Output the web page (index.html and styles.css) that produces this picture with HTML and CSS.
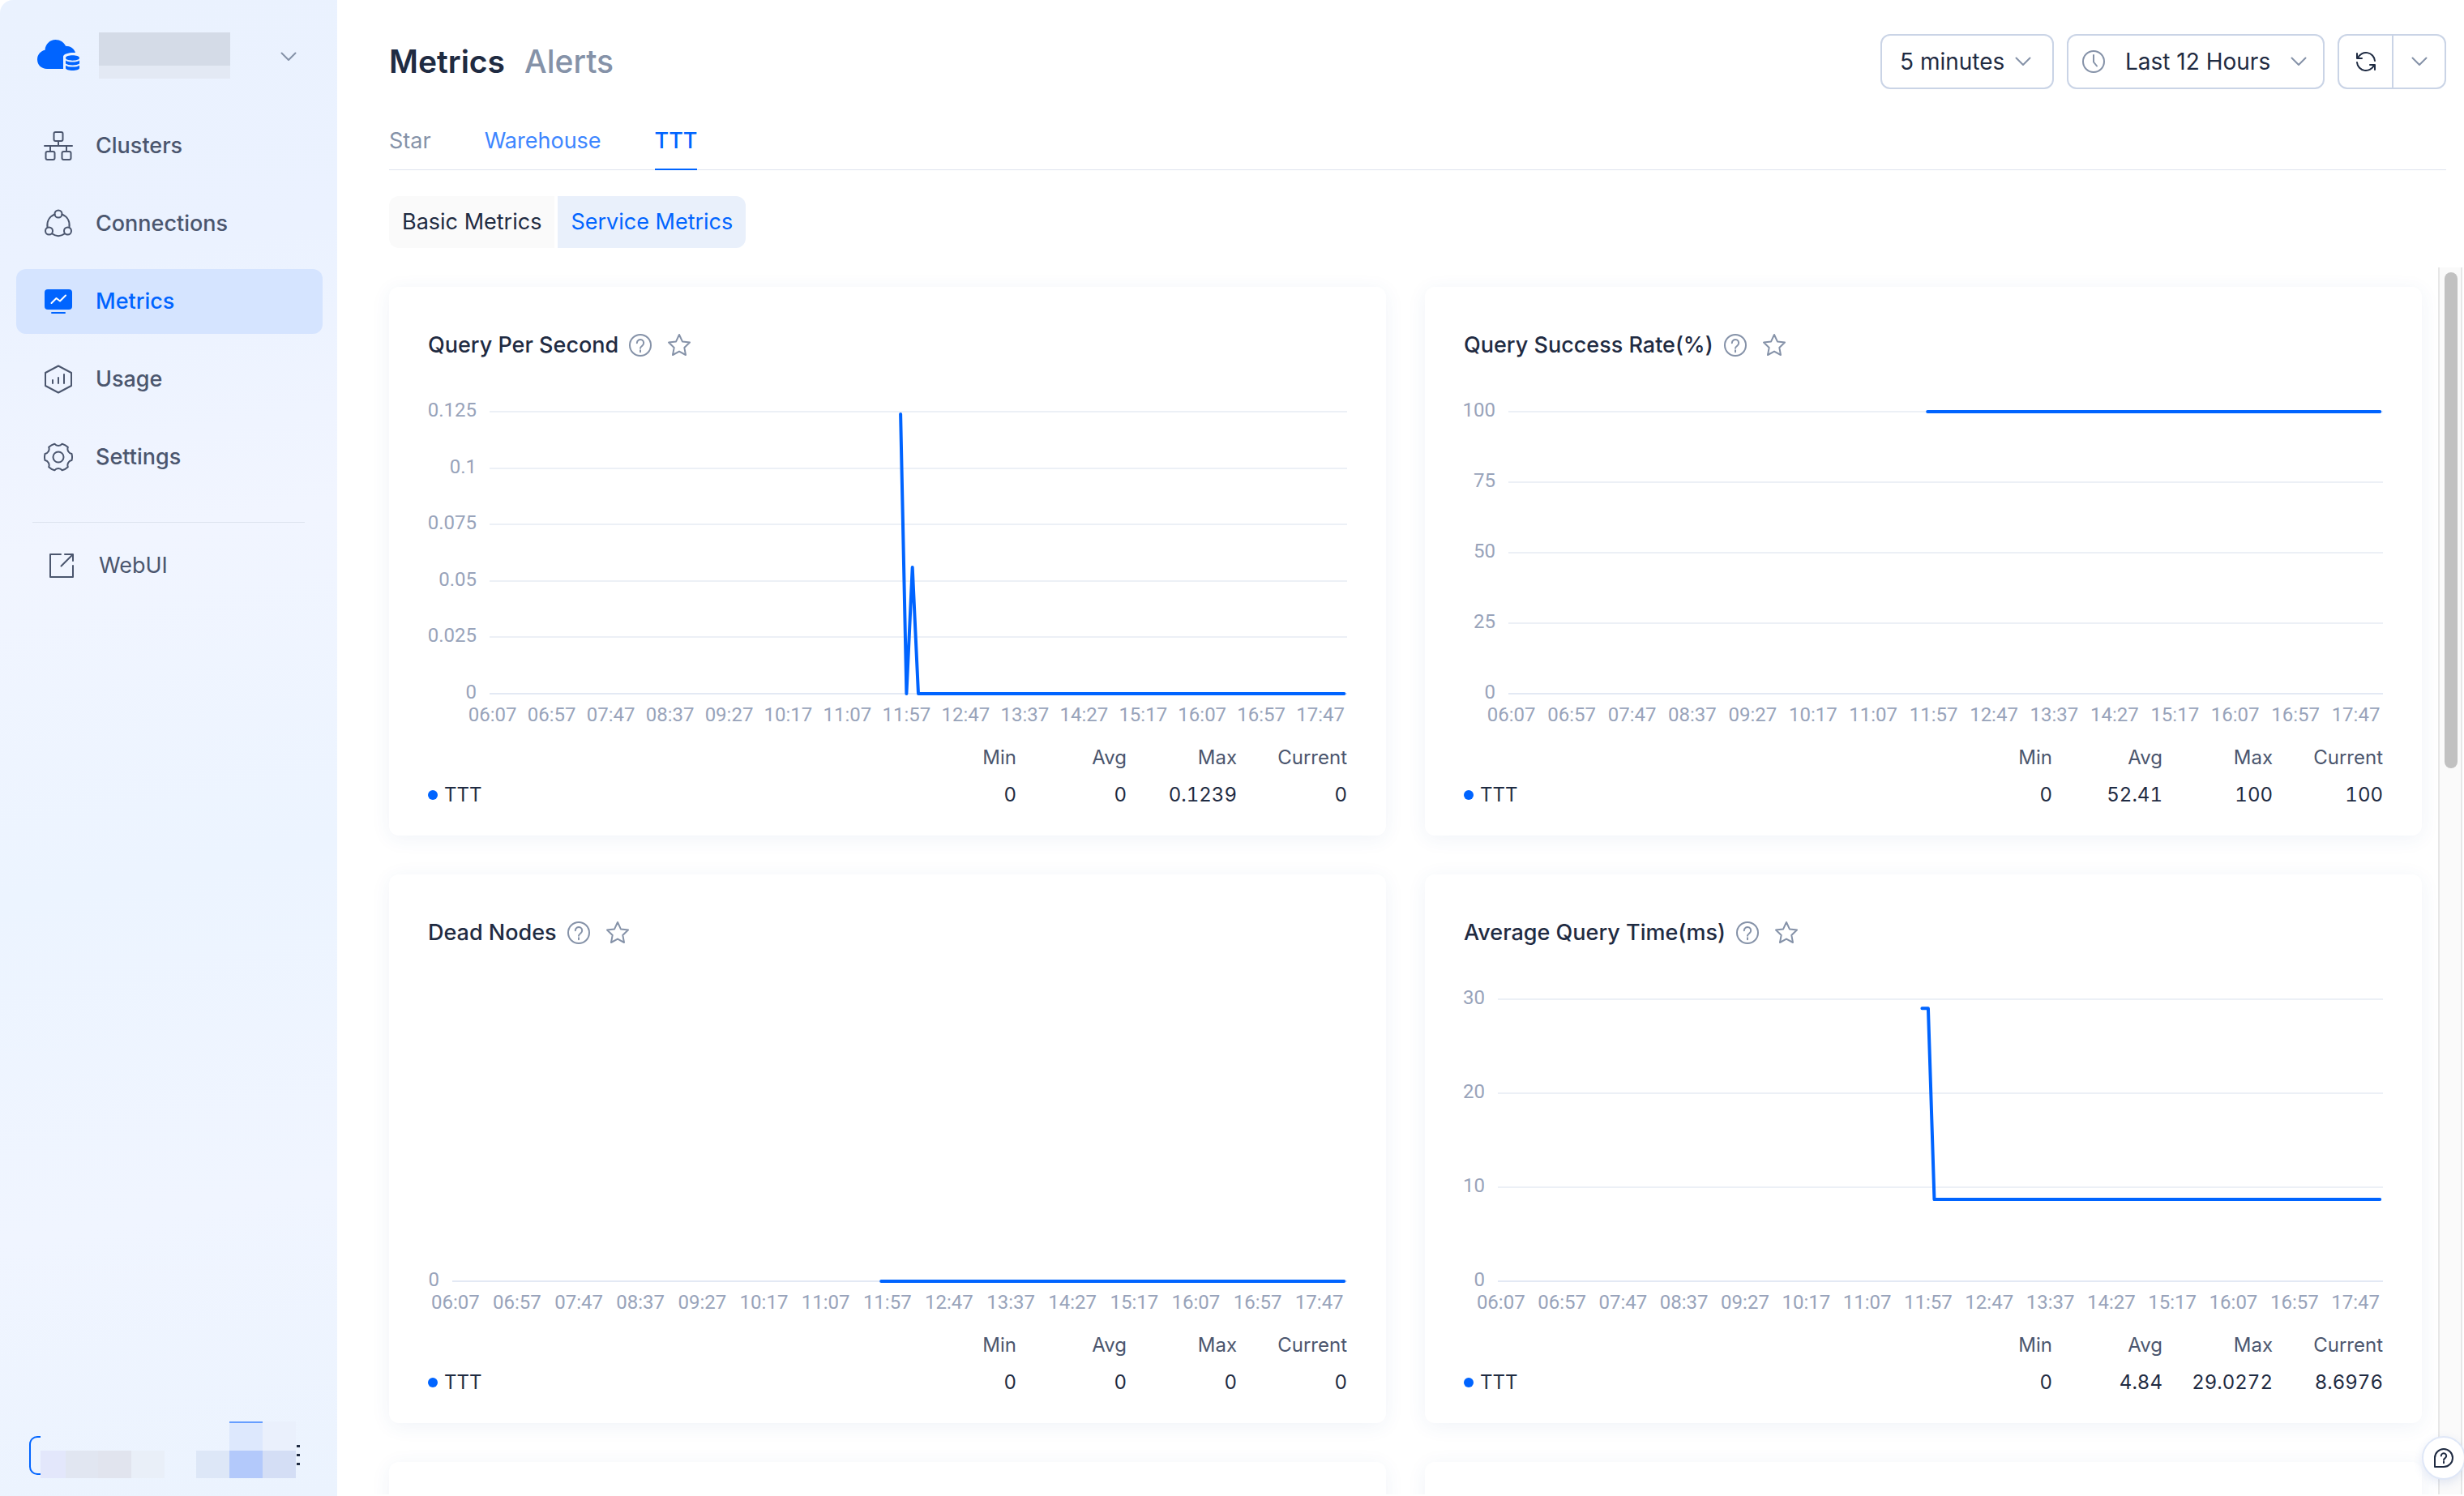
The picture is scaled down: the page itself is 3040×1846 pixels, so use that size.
FILE: index.html
```html
<!DOCTYPE html>
<html lang="en">
<head>
    <meta charset="UTF-8">
    <meta name="viewport" content="width=device-width, initial-scale=1.0">
    <title>Metrics</title>
    <link rel="stylesheet" href="styles.css">
</head>
<body>
    <!-- shared icons -->
    <svg class="defs" width="0" height="0" aria-hidden="true">
        <symbol id="chevron" viewBox="0 0 20 12"><path d="M1.500 1.500l8.500 8.500 8.500-8.500"/></symbol>
        <symbol id="help" viewBox="0 0 30 30">
            <circle cx="15" cy="15" r="13"/>
            <path d="M10.800 12.200a4.200 4.200 0 1 1 6.600 3.400c-1.500 1.100-2.400 1.700-2.400 3.200"/>
            <path d="M15 21.200v2"/>
        </symbol>
        <symbol id="star" viewBox="0 0 30 30">
            <path d="M15 2l3.900 8.400 9.100 1.200-6.700 6.300 1.700 9.100-8-4.400-8 4.400 1.700-9.100L2 11.600l9.100-1.200z"/>
        </symbol>
    </svg>

    <div class="app">
        <aside class="sidebar">
            <div class="brand">
                <svg class="brand-logo" viewBox="0 0 52 38">
                    <path d="M12 36C5 36 0 31 0 24.500c0-6 4-10.700 9.500-11.800C10 5.500 15.500 0 22.500 0c5.600 0 10.200 3 12.500 7.800 5.800 0 10.800 3.400 12 8.200-7-.5-14 1-15 4.500V36z"/>
                    <path d="M35 22.500c0-4.200 17-4.200 17 0s-17 4.200-17 0zM35 25.500c3 2.700 14 2.700 17 0v4c-3 2.500-14 2.500-17 0zM35 31.700c3 2.500 14 2.500 17 0V35c0 4-17 4-17 0z"/>
                </svg>
                <div class="mask-name"><span></span><span></span></div>
                <svg class="chevron brand-chevron"><use href="#chevron"/></svg>
            </div>

            <nav class="nav">
                <a class="nav-item" href="#">
                    <svg class="nav-icon" viewBox="0 0 36 36">
                        <rect x="12.500" y="1" width="11" height="11" rx="2"/>
                        <rect x="2.500" y="25" width="11" height="10" rx="2"/>
                        <rect x="22.500" y="25" width="11" height="10" rx="2"/>
                        <path d="M18 12v6M1 18h34M8 18v7M28 18v7"/>
                    </svg>
                    Clusters
                </a>
                <a class="nav-item" href="#">
                    <svg class="nav-icon" viewBox="0 0 36 36">
                        <circle cx="18" cy="6" r="4.500"/>
                        <circle cx="6.500" cy="27" r="4.500"/>
                        <circle cx="29.500" cy="27" r="4.500"/>
                        <path d="M13.500 6.500C7 9 3.500 15 4.500 22.500M22.500 6.500C29 9 32.500 15 31.500 22.500M10.500 30.500c4.500 3.500 10.500 3.500 15 0"/>
                    </svg>
                    Connections
                </a>
                <a class="nav-item active" href="#">
                    <svg class="nav-icon" viewBox="0 0 36 36">
                        <rect class="solid" x="1" y="3" width="34" height="25" rx="4"/>
                        <path d="M10 32h16"/>
                        <path class="spark" d="M9.500 20l6-6 4.500 3.500 7-7"/>
                    </svg>
                    Metrics
                </a>
                <a class="nav-item" href="#">
                    <svg class="nav-icon" viewBox="0 0 36 36">
                        <path d="M18 1.500L34 10v16l-16 8.500L2 26V10z"/>
                        <path d="M11 19v4M18 16v7M25 12v11"/>
                    </svg>
                    Usage
                </a>
                <a class="nav-item" href="#">
                    <svg class="nav-icon" viewBox="0 0 36 36">
                        <path d="M34.500 22.100A6 6 0 0 0 29.800 30.200A17 17 0 0 1 22.700 34.300A6 6 0 0 0 13.300 34.300A17 17 0 0 1 6.200 30.200A6 6 0 0 0 1.500 22.100A17 17 0 0 1 1.500 13.900A6 6 0 0 0 6.200 5.800A17 17 0 0 1 13.300 1.700A6 6 0 0 0 22.700 1.700A17 17 0 0 1 29.800 5.800A6 6 0 0 0 34.500 13.900A17 17 0 0 1 34.500 22.100z"/>
                        <circle cx="18" cy="18" r="6.500"/>
                    </svg>
                    Settings
                </a>
            </nav>

            <a class="nav-item web-ui" href="#">
                <svg class="nav-icon" viewBox="0 0 36 36">
                    <path d="M17 4H4v28h28V18M22 4h10v8M32 4L17.500 18.500"/>
                </svg>
                WebUI
            </a>

            <div class="account">
                <div class="account-frame"></div>
                <div class="mask-row"><span></span><span></span><span></span><span></span></div>
                <div class="mask-grid"><span></span><span></span><span></span><span></span><span></span><span></span></div>
                <button class="more" aria-label="More"><i></i><i></i><i></i></button>
            </div>
        </aside>

        <main class="main">
            <header class="header">
                <h1><a href="#">Metrics</a><a class="muted" href="#">Alerts</a></h1>
                <div class="toolbar">
                    <div class="field">
                        <select aria-label="Interval"><option>5 minutes</option></select>
                        <svg class="chevron"><use href="#chevron"/></svg>
                    </div>
                    <div class="field range">
                        <svg class="clock" viewBox="0 0 30 30"><circle cx="15" cy="15" r="13"/><path d="M15 7v8.500l4 5"/></svg>
                        <select aria-label="Time range"><option>Last 12 Hours</option></select>
                        <svg class="chevron"><use href="#chevron"/></svg>
                    </div>
                    <div class="refresh">
                        <button aria-label="Refresh">
                            <svg class="refresh-icon" viewBox="0 0 26 26">
                                <path d="M2 3v6h6M3 8.500A11 11 0 0 1 24 12M24 23v-6h-6M23 17.500A11 11 0 0 1 2 14"/>
                            </svg>
                        </button>
                        <button aria-label="Refresh options"><svg class="chevron"><use href="#chevron"/></svg></button>
                    </div>
                </div>
            </header>

            <nav class="tabs">
                <a class="muted" href="#">Star</a>
                <a class="hover" href="#">Warehouse</a>
                <a class="active" href="#">TTT</a>
            </nav>

            <div class="switch">
                <button>Basic Metrics</button>
                <button class="active">Service Metrics</button>
            </div>

            <div class="scroll">
                <div class="cards" id="cards"></div>
                <div class="track"><div class="thumb"></div></div>
            </div>
        </main>

        <button class="support" aria-label="Help">
            <svg viewBox="0 0 26 26">
                <path d="M2 24V13a11 11 0 1 1 11 11z"/>
                <path d="M9.800 10.500a3.200 3.200 0 1 1 5 2.600c-1.200.8-1.800 1.400-1.800 2.600M13 17.800v1.400"/>
            </svg>
        </button>
    </div>

    <script src="charts.js"></script>
</body>
</html>
```

FILE: styles.css
```css
* {
    box-sizing: border-box;
}

body {
    margin: 0;
    font-family: Inter, "Liberation Sans", sans-serif;
    font-size: 27px;
    line-height: 40px;
    color: #1f2b42;
    background: #fff;
}

a {
    color: inherit;
    text-decoration: none;
}

button, select {
    font: inherit;
    color: inherit;
    background: none;
    border: none;
    padding: 0;
    cursor: pointer;
}

svg {
    flex: none;
    fill: none;
    stroke: currentColor;
    stroke-width: 2;
    stroke-linecap: round;
    stroke-linejoin: round;
}

.defs {
    position: absolute;
}

.muted {
    color: #8592a8;
}

.app {
    display: flex;
    height: 100vh;
    overflow: hidden;
}

/* sidebar */
.sidebar {
    display: flex;
    flex-direction: column;
    width: 416px;
    flex: none;
    color: #4b566e;
    background: linear-gradient(170deg, #eaf2fe 0%, #ebf2ff 18%, #f1f5ff 36%, #ecf4ff 58%, #f0f5ff 80%, #ebf3fe 100%);
    border-top-left-radius: 16px;
}

.brand {
    display: flex;
    align-items: center;
    height: 132px;
    padding: 4px 50px 0 46px;
}

.brand-logo {
    width: 52px;
    height: 38px;
    fill: #0064ff;
    stroke: none;
}

.mask-name {
    width: 162px;
    margin-left: 24px;
}

.mask-name span {
    display: block;
    height: 41px;
    background: #d4dbe7;
}

.mask-name span + span {
    height: 16px;
    background: #e3e9f4;
}

.chevron {
    width: 20px;
    height: 12px;
    color: #8592a8;
}

.brand-chevron {
    margin-top: 4px;
    margin-left: auto;
}

.nav {
    display: flex;
    flex-direction: column;
    gap: 16px;
    margin: 8px 18px 0 20px;
    padding-bottom: 40px;
}

.nav-item {
    display: flex;
    align-items: center;
    gap: 28px;
    height: 80px;
    padding-left: 34px;
    border-radius: 12px;
    font-weight: 500;
}

.nav-item.active {
    color: #0064ff;
    background: #d5e4ff;
}

.nav-icon {
    width: 36px;
    height: 36px;
}

.nav-icon .solid {
    fill: currentColor;
    stroke: none;
}

.nav-icon .spark {
    stroke: #fff;
}

.web-ui {
    height: 106px;
    margin: 0 40px;
    padding-left: 18px;
    border-top: 1px solid #dce2ee;
    border-radius: 0;
    font-weight: 400;
}

.account {
    display: flex;
    align-items: flex-end;
    margin-top: auto;
    padding: 0 44px 22px 36px;
}

.account-frame {
    width: 14px;
    height: 48px;
    margin-bottom: 4px;
    border: 2px solid #0064ff;
    border-right: none;
    border-radius: 10px 0 0 10px;
}

.mask-row {
    display: grid;
    grid-template-columns: 31px 40px 41px 41px;
    height: 34px;
}

.mask-row span:nth-child(1) { background: #e3e7fb; }
.mask-row span:nth-child(2) { background: #e1e6f1; }
.mask-row span:nth-child(3) { background: #e1e4ee; }
.mask-row span:nth-child(4) { background: #e9eff8; }

.mask-grid {
    display: grid;
    grid-template-columns: 41px 41px 41px;
    grid-template-rows: 36px 34px;
    margin-left: 39px;
}

.mask-grid span:nth-child(2) { background: #dde8fd; border-top: 2px solid #659dff; }
.mask-grid span:nth-child(3) { background: #eaf0fc; }
.mask-grid span:nth-child(4) { background: #dde7f7; }
.mask-grid span:nth-child(5) { background: #b3c9fb; }
.mask-grid span:nth-child(6) { background: #d4def5; }

.more {
    display: flex;
    flex-direction: column;
    gap: 8px;
    margin-bottom: 16px;
    margin-left: 1px;
}

.more i {
    width: 4px;
    height: 3px;
    background: #1f2b42;
}

/* page head */
.main {
    display: flex;
    flex-direction: column;
    flex: 1;
    min-width: 0;
}

.header {
    display: flex;
    justify-content: space-between;
    align-items: center;
    height: 152px;
    padding: 0 22px 0 64px;
}

h1 {
    display: flex;
    gap: 24px;
    margin: 0;
    font-size: 39px;
    font-weight: 600;
}

h1 .muted {
    font-weight: 500;
}

.toolbar {
    display: flex;
    gap: 16px;
    font-size: 28px;
}

.field, .refresh {
    display: flex;
    align-items: center;
    height: 68px;
    border: 2px solid #cad4e6;
    border-radius: 12px;
}

.field {
    gap: 12px;
    padding: 0 26px 0 22px;
}

.field select {
    appearance: none;
}

.field.range {
    gap: 24px;
    padding: 0 20px 0 16px;
}

.clock {
    width: 30px;
    height: 30px;
    color: #8592a8;
}

.refresh button {
    display: grid;
    place-items: center;
    width: 65px;
    height: 64px;
}

.refresh button + button {
    border-left: 2px solid #cad4e6;
}

.refresh-icon {
    width: 26px;
    height: 26px;
}

.tabs {
    display: flex;
    gap: 66px;
    height: 58px;
    margin: 0 22px 0 64px;
    border-bottom: 1px solid #dfe3ee;
}

.tabs a {
    height: 58px;
    line-height: 44px;
}

.tabs .hover {
    color: #3d86ff;
}

.tabs .active {
    color: #0064ff;
    font-weight: 500;
    border-bottom: 2px solid #0064ff;
}

.switch {
    display: flex;
    gap: 4px;
    margin: 32px 0 24px 64px;
}

.switch button {
    height: 64px;
    padding: 0 16px;
    background: #fafafa;
    border-radius: 12px 0 0 12px;
}

.switch .active {
    color: #0064ff;
    background: #e9f0fb;
    border-radius: 0 12px 12px 0;
}

/* cards */
.scroll {
    display: flex;
    flex: 1;
    min-height: 0;
    margin: 0 2px 2px 0;
    overflow: hidden;
}

.cards {
    display: grid;
    grid-template-columns: 1fr 1fr;
    grid-auto-rows: max-content;
    gap: 48px;
    align-content: start;
    flex: 1;
    min-width: 0;
    padding: 24px 20px 0 64px;
    overflow: hidden;
}

.card {
    min-width: 0;
    min-height: 240px;
    padding: 48px 48px 27px;
    border-radius: 12px;
    background: #fff;
    box-shadow: 0 4px 24px rgba(40, 80, 160, 0.07);
}

.card h2 {
    display: flex;
    align-items: center;
    height: 48px;
    margin: 0;
    font-size: 27px;
    font-weight: 500;
}

.card h2 svg {
    width: 30px;
    height: 30px;
    margin-left: 12px;
    color: #8592a8;
}

.card h2 svg + svg {
    margin-left: 18px;
}

.chart {
    display: block;
    width: 100%;
    height: 462px;
    overflow: visible;
}

.chart text {
    font-family: Roboto, "Liberation Sans", sans-serif;
    font-size: 24px;
    fill: #98a3ba;
    stroke: none;
}

.chart .grid {
    stroke: #ecf0f6;
    stroke-linecap: butt;
}

.chart .axis {
    stroke: #e3e9f4;
    stroke-linecap: butt;
}

.chart .series {
    stroke: #0064ff;
    stroke-width: 4;
}

.legend {
    width: 100%;
    border-collapse: collapse;
    table-layout: fixed;
    font-size: 24px;
    font-variant-numeric: tabular-nums;
}

.legend th, .legend td {
    width: 136px;
    height: 46px;
    padding: 0;
    text-align: right;
    font-weight: 400;
    white-space: nowrap;
}

.legend thead {
    color: #4b566e;
}

.legend tr > :first-child {
    width: auto;
    text-align: left;
}

.legend tbody th::before {
    content: "";
    display: inline-block;
    width: 12px;
    height: 12px;
    margin-right: 8px;
    border-radius: 50%;
    background: #0064ff;
    vertical-align: 2px;
}

.track {
    width: 30px;
    padding: 6px 4px 0 6px;
    border: solid #e7e7e7;
    border-width: 0 2px;
    background: #fafafa;
}

.thumb {
    height: 612px;
    border-radius: 8px;
    background: #c1c1c1;
}

/* floats over the page */
.support {
    position: absolute;
    right: -2px;
    bottom: 20px;
    display: grid;
    place-items: center;
    width: 54px;
    height: 54px;
    border: 2px solid #dfe7f7;
    border-radius: 50%;
    background: #fff;
    box-shadow: 0 4px 12px rgba(40, 80, 180, 0.12);
}

.support svg {
    width: 26px;
    height: 26px;
}
```

FILE: charts.js
```js
const POINTS = 145; // 12 hours, one point every 5 minutes
const TOP = 58;
const BOTTOM = 406;

const fill = (from, value) => Array.from({ length: POINTS - from }, (_, i) => [from + i, value]);

const metrics = [
    {
        title: 'Query Per Second', ticks: ['0', '0.025', '0.05', '0.075', '0.1', '0.125'], max: 0.125, left: 76,
        data: [[69, 0.1239], [70, 0], [71, 0.056], ...fill(72, 0)], stats: ['0', '0', '0.1239', '0']
    },
    {
        title: 'Query Success Rate(%)', ticks: ['0', '25', '50', '75', '100'], max: 100, left: 55,
        data: fill(69, 100), stats: ['0', '52.41', '100', '100']
    },
    {
        title: 'Dead Nodes', ticks: ['0'], max: 1, left: 30,
        data: fill(69, 0), stats: ['0', '0', '0', '0']
    },
    {
        title: 'Average Query Time(ms)', ticks: ['0', '10', '20', '30'], max: 30, left: 42,
        data: [[69, 29.0272], [70, 29.0272], ...fill(71, 8.6976)], stats: ['0', '4.84', '29.0272', '8.6976']
    }
];

function timeLabel(index) {
    const minutes = 6 * 60 + 7 + index * 5;
    return `${String(Math.floor(minutes / 60)).padStart(2, '0')}:${String(minutes % 60).padStart(2, '0')}`;
}

function drawChart(svg, metric) {
    const width = svg.clientWidth || svg.getBoundingClientRect().width;
    const band = (width - metric.left) / POINTS;
    const x = i => metric.left + (i + 0.5) * band;
    const y = v => BOTTOM - (v / metric.max) * (BOTTOM - TOP);
    let html = '';

    metric.ticks.forEach((tick, i) => {
        const ty = Math.round(y(Number(tick)));
        html += `<line class="${i ? 'grid' : 'axis'}" x1="${metric.left}" x2="${width}" y1="${ty}" y2="${ty}"/>`;
        html += `<text x="${metric.left - 16}" y="${ty + 6}" text-anchor="end">${tick}</text>`;
    });
    for (let i = 0; i < POINTS; i += 10) {
        html += `<text x="${x(i)}" y="440" text-anchor="middle">${timeLabel(i)}</text>`;
    }
    html += `<polyline class="series" points="${metric.data.map(p => x(p[0]) + ',' + y(p[1])).join(' ')}"/>`;
    svg.innerHTML = html;
}

const cards = document.getElementById('cards');

metrics.forEach(metric => {
    const card = document.createElement('section');
    card.className = 'card';
    card.innerHTML = `
        <h2>${metric.title}<svg><use href="#help"/></svg><svg><use href="#star"/></svg></h2>
        <svg class="chart"></svg>
        <table class="legend">
            <thead><tr><td></td><th>Min</th><th>Avg</th><th>Max</th><th>Current</th></tr></thead>
            <tbody><tr><th>TTT</th>${metric.stats.map(s => `<td>${s}</td>`).join('')}</tr></tbody>
        </table>`;
    cards.appendChild(card);
});

// next row, still loading
for (let i = 0; i < 2; i++) {
    const card = document.createElement('section');
    card.className = 'card';
    cards.appendChild(card);
}

function drawAll() {
    document.querySelectorAll('.chart').forEach((svg, i) => drawChart(svg, metrics[i]));
}

drawAll();
window.addEventListener('resize', drawAll);
```
